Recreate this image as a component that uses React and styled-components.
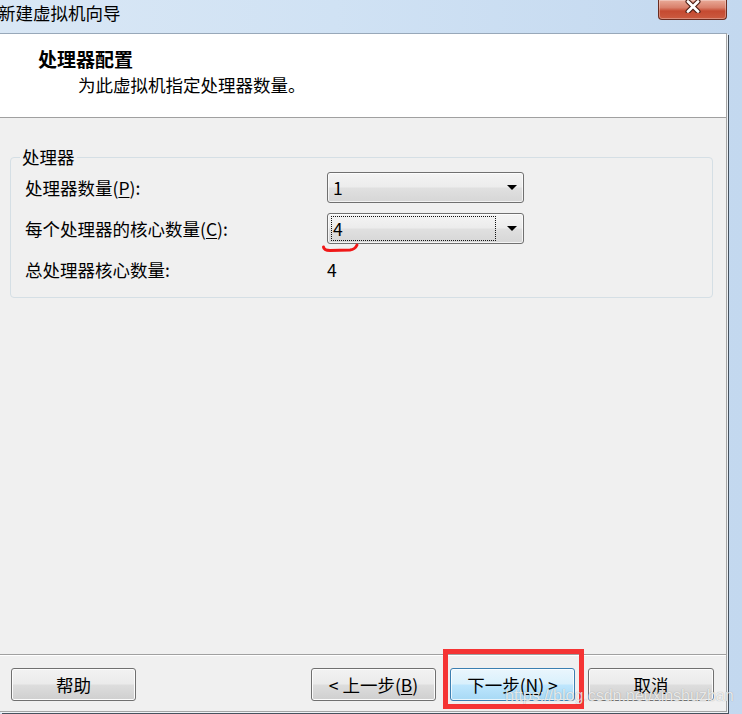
import React from "react";
import styled, { createGlobalStyle } from "styled-components";

const GlobalStyle = createGlobalStyle`
  *, *::before, *::after { box-sizing: border-box; }
  html, body { margin: 0; padding: 0; }
  body {
    font-family: "Noto Sans CJK SC", "Noto Sans", sans-serif;
    color: #000;
    background: #c6dbf0;
  }
`;

const Window = styled.div`
  position: relative;
  width: 742px;
  height: 714px;
  overflow: hidden;
  display: flex;
  flex-direction: column;
  padding: 0 15px 2px 0;
  background: linear-gradient(90deg, #d9e7f5 0%, #d0e2f4 45%, #c3d8ef 100%);
`;

const TitleBar = styled.div`
  height: 33px;
  flex: none;
  display: flex;
  align-items: flex-start;
  justify-content: space-between;
`;

const TitleText = styled.div`
  margin-left: -2px;
  font-size: 17.5px;
  line-height: 26px;
  color: #000;
`;

const CloseButton = styled.div`
  width: 69px;
  height: 20px;
  display: flex;
  justify-content: center;
  align-items: flex-start;
  padding-top: 0;
  border: 1px solid #6a2c20;
  border-top: none;
  border-radius: 0 0 4px 4px;
  background: linear-gradient(#e9aa98 0%, #d9806b 40%, #c54a31 58%, #cb5b40 100%);
  box-shadow: inset 0 0 0 1px rgba(255, 255, 255, 0.3);
`;

const Client = styled.div`
  flex: 1;
  display: flex;
  flex-direction: column;
  border-top: 1px solid #98a8b9;
  border-right: 1px solid #a6a6a6;
  border-bottom: 1px solid #a6a6a6;
  box-shadow: 1px 1px 0 #eef2f6, 2px 2px 0 #46525e;
  background: #f0f0f0;
`;

const Header = styled.div`
  height: 84px;
  flex: none;
  background: #fff;
  border-bottom: 1px solid #a0a0a0;
  padding-top: 13px;
`;

const HeaderTitle = styled.div`
  padding-left: 38px;
  font-size: 19px;
  font-weight: bold;
  line-height: 24px;
`;

const HeaderSubtitle = styled.div`
  margin-top: 2px;
  padding-left: 78px;
  font-size: 17.5px;
  line-height: 24px;
`;

const Body = styled.div`
  flex: 1;
  display: flex;
  flex-direction: column;
  background: #f0f0f0;
`;

const GroupBox = styled.fieldset`
  margin: 27px 13px 0 10px;
  padding: 3px 14px 12px 14px;
  min-width: 0;
  border: 1px solid #d5dfe5;
  border-radius: 4px;
`;

const GroupLegend = styled.legend`
  margin-left: -5px;
  padding: 0 2px;
  font-size: 17.5px;
  line-height: 24px;
`;

const FormGrid = styled.div`
  display: grid;
  grid-template-columns: 302px 197px;
  grid-auto-rows: 31px;
  row-gap: 10px;
  align-items: center;
`;

const Label = styled.div`
  font-size: 17.5px;
  line-height: 24px;
  white-space: nowrap;
`;

const Value = styled.div`
  font-size: 17.5px;
  line-height: 24px;
`;

const Combo = styled.div`
  position: relative;
  height: 31px;
  display: flex;
  align-items: center;
  padding: 0 6px 0 3px;
  border: 1px solid #707070;
  border-radius: 3px;
  background: linear-gradient(#f4f4f4 0%, #ececec 48%, #e0e0e0 52%, #d6d6d6 100%);
  box-shadow: inset 0 0 0 1px rgba(255, 255, 255, 0.7);
`;

const ComboValue = styled.div`
  flex: 1;
  height: 25px;
  display: flex;
  align-items: center;
  padding-left: 1px;
  border: 1px dotted ${(p) => (p.$focused ? "#111" : "transparent")};
  font-size: 17.5px;
  line-height: 1;
`;

const ComboArrow = styled.span`
  margin-left: 11px;
  width: 0;
  height: 0;
  border-left: 5px solid transparent;
  border-right: 5px solid transparent;
  border-top: 5px solid #000;
`;

const RedMark = styled.svg`
  position: absolute;
  left: -6px;
  top: 29px;
  overflow: visible;
`;

const Footer = styled.div`
  margin-top: auto;
  display: flex;
  align-items: center;
  padding: 13px 12px 10px 11px;
  border-top: 1px solid #a0a0a0;
  box-shadow: inset 0 1px 0 #fff;
`;

const Button = styled.div`
  position: relative;
  width: ${(p) => p.$w || 125}px;
  height: 33px;
  margin-left: ${(p) => p.$ml || 0}px;
  display: flex;
  align-items: center;
  justify-content: center;
  font-size: 17.5px;
  line-height: 1;
  border: 1px solid ${(p) => (p.$primary ? "#3c7fb1" : "#707070")};
  border-radius: 3px;
  background: ${(p) =>
    p.$primary
      ? "linear-gradient(#eaf6fd 0%, #d9f0fc 48%, #bee6fd 52%, #a7d9f5 100%)"
      : "linear-gradient(#f2f2f2 0%, #ebebeb 48%, #dddddd 52%, #cfcfcf 100%)"};
  box-shadow: inset 0 0 0 1px ${(p) => (p.$primary ? "rgba(255,255,255,0.75)" : "#fcfcfc")};
`;

const Highlight = styled.span`
  position: absolute;
  left: -8px;
  right: -10px;
  top: -20px;
  bottom: -9px;
  border: 5px solid #f53434;
  pointer-events: none;
`;

const Accel = styled.u`
  text-decoration-thickness: 1px;
  text-underline-offset: 2px;
`;

const Watermark = styled.div`
  position: absolute;
  left: 505px;
  top: 687px;
  font-family: "Liberation Sans", Arial, sans-serif;
  font-size: 16px;
  line-height: 18px;
  white-space: nowrap;
  color: rgba(255, 255, 255, 0.8);
  text-shadow: 0 0 1px rgba(0, 0, 0, 0.35);
  pointer-events: none;
`;

export default function App() {
  return (
    <>
      <GlobalStyle />
      <Window>
        <TitleBar>
          <TitleText>新建虚拟机向导</TitleText>
          <CloseButton>
            <svg width="18" height="13" viewBox="0 0 18 13">
              <path d="M4 1.5 L14 11.5 M14 1.5 L4 11.5" stroke="#4a1d14" strokeWidth="5" strokeLinecap="round" />
              <path d="M4 1.5 L14 11.5 M14 1.5 L4 11.5" stroke="#fff" strokeWidth="2.8" strokeLinecap="round" />
            </svg>
          </CloseButton>
        </TitleBar>
        <Client>
          <Header>
            <HeaderTitle>处理器配置</HeaderTitle>
            <HeaderSubtitle>为此虚拟机指定处理器数量。</HeaderSubtitle>
          </Header>
          <Body>
            <GroupBox>
              <GroupLegend>处理器</GroupLegend>
              <FormGrid>
                <Label>
                  处理器数量(<Accel>P</Accel>):
                </Label>
                <Combo>
                  <ComboValue>1</ComboValue>
                  <ComboArrow />
                </Combo>
                <Label>
                  每个处理器的核心数量(<Accel>C</Accel>):
                </Label>
                <Combo>
                  <ComboValue $focused>4</ComboValue>
                  <ComboArrow />
                  <RedMark width="36" height="10" viewBox="0 0 36 10">
                    <path
                      d="M1.5 4 Q2 7.5 8 7.5 L28 7 Q33 6.5 35 2"
                      fill="none"
                      stroke="#f01818"
                      strokeWidth="3"
                      strokeLinecap="round"
                    />
                  </RedMark>
                </Combo>
                <Label>总处理器核心数量:</Label>
                <Value>4</Value>
              </FormGrid>
            </GroupBox>
            <Footer>
              <Button>帮助</Button>
              <Button $ml={175}>
                &lt; 上一步(<Accel>B</Accel>)
              </Button>
              <Button $primary $ml={14}>
                下一步(<Accel>N</Accel>) &gt;
                <Highlight />
              </Button>
              <Button $ml={13} $w={126}>
                取消
              </Button>
            </Footer>
          </Body>
        </Client>
        <Watermark>https://blog.csdn.net/xinshuzban</Watermark>
      </Window>
    </>
  );
}
